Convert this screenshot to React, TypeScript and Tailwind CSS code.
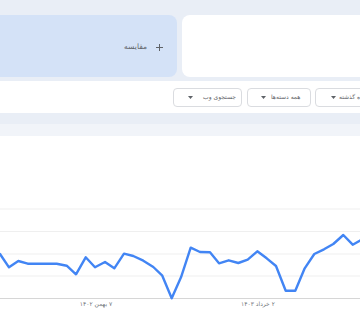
import React from "react";

const pts: [number, number][] = [
  [0, 254], [9, 267.3], [18.3, 261], [27.7, 263.7], [36.7, 263.7], [46.7, 263.7],
  [56.7, 263.7], [66.7, 265.7], [76, 274.3], [85.7, 257.3], [95, 267.3], [105, 262],
  [114.3, 268.3], [124, 253.7], [133.3, 256], [143.3, 260.7], [153.3, 267], [162.3, 275.7],
  [171.7, 298.3], [181, 277.3], [190.7, 247.7], [200, 252], [210, 252.3], [219, 263.3],
  [228.7, 260.3], [238.3, 263], [247.7, 259.7], [257.3, 251.3], [266.7, 258.3], [276, 266],
  [285.7, 290.7], [295.3, 290.7], [304.7, 268.3], [314.3, 254], [324, 249.3], [333.3, 244],
  [343.3, 235], [352.7, 244.7], [362, 239.5],
];

const TOP = 136;

function Caret() {
  return (
    <svg width="5" height="3" viewBox="0 0 5 3" className="shrink-0">
      <path d="M0 0 L5 0 L2.5 3 Z" fill="#5f6368" />
    </svg>
  );
}

export default function App() {
  const d = pts.map((p, i) => `${i === 0 ? "M" : "L"}${p[0]} ${p[1] - TOP}`).join(" ");
  const font = { fontFamily: '"DejaVu Sans", "Noto Sans", sans-serif' };
  return (
    <div className="w-[360px] h-[320px] overflow-hidden bg-[#e9eef6]" style={font}>
      <div className="h-[15px]" />
      <div className="flex gap-[5px] h-[62px] -ml-[20px] -mr-[20px]">
        <div className="w-[197px] rounded-[8px] bg-[#d4e2f7] flex items-center justify-end pr-[14px] gap-[9px] pt-[2px]">
          <span className="text-[7.5px] text-[#5f6368] leading-none" dir="rtl">مقایسه</span>
          <svg width="7" height="7" viewBox="0 0 7 7">
            <path d="M3.5 0 V7 M0 3.5 H7" stroke="#5f6368" strokeWidth="1" />
          </svg>
        </div>
        <div className="flex-1 rounded-[8px] bg-white" />
      </div>
      <div className="h-[4px]" />
      <div className="h-[32px] bg-white flex items-center justify-end -mr-[25px] gap-[4.5px]">
        <div className="w-[69px] h-[19px] rounded-[4px] border border-[#dadce0] bg-white flex items-center justify-between pl-[14px] pr-[5px]">
          <Caret />
          <span className="text-[6px] text-[#5f6368] leading-none whitespace-nowrap" dir="rtl">جستجوی وب</span>
        </div>
        <div className="w-[64px] h-[19px] rounded-[4px] border border-[#dadce0] bg-white flex items-center justify-between pl-[13px] pr-[9px]">
          <Caret />
          <span className="text-[6px] text-[#5f6368] leading-none whitespace-nowrap" dir="rtl">همه دسته‌ها</span>
        </div>
        <div className="w-[70px] h-[19px] rounded-[4px] border border-[#dadce0] bg-white flex items-center justify-start pl-[15px] gap-[3px]">
          <Caret />
          <span className="text-[6px] text-[#5f6368] leading-none whitespace-nowrap" dir="rtl">۱۲ ماه گذشته</span>
        </div>
      </div>
      <div className="h-[11px] bg-[#e9eef6]" />
      <div className="h-[12px] bg-[#f1f4f9]" />
      <div className="h-[184px] bg-white">
        <svg width="360" height="184" viewBox="0 0 360 184" className="block">
          {[209, 231.5, 254, 276].map((y) => (
            <line key={y} x1="0" x2="360" y1={y - TOP} y2={y - TOP} stroke="#efefef" strokeWidth="1" />
          ))}
          <line x1="0" x2="360" y1={298.5 - TOP} y2={298.5 - TOP} stroke="#d6d6d6" strokeWidth="1.2" />
          <path d={d} fill="none" stroke="#4285f4" strokeWidth="2.4" strokeLinejoin="round" strokeLinecap="round" />
          <text x="96" y={305.5 - TOP} fontSize="6" fill="#70757a" textAnchor="middle" direction="rtl" style={font}>۷ بهمن ۱۴۰۲</text>
          <text x="258" y={305.5 - TOP} fontSize="6" fill="#70757a" textAnchor="middle" direction="rtl" style={font}>۲ خرداد ۱۴۰۳</text>
        </svg>
      </div>
    </div>
  );
}
